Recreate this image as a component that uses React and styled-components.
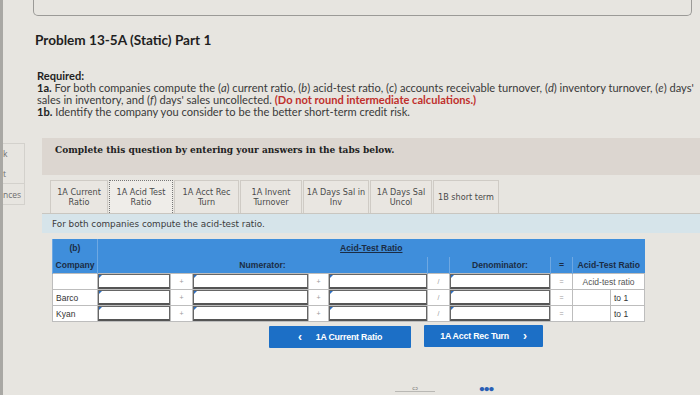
import React from 'react';
import styled, { createGlobalStyle } from 'styled-components';

const Global = createGlobalStyle`
  html, body {
    margin: 0;
    padding: 0;
    background: #e7e5e0;
    overflow: hidden;
  }
  body {
    font-family: "Lato", "Liberation Sans", sans-serif;
    color: #2a2a2a;
  }
`;

const Page = styled.div`
  width: 700px;
  height: 395px;
  display: flex;
  overflow: hidden;
  position: relative;
`;

const Side = styled.div`
  width: 25px;
  flex: none;
  border-left: 3px solid #a9a8a4;
  box-sizing: border-box;
  padding-top: 143px;
  display: flex;
  flex-direction: column;
`;

const SideItem = styled.div`
  height: ${p => p.h}px;
  border-top: 1px solid #d3d1cc;
  border-right: 1px solid #d3d1cc;
  border-bottom: ${p => (p.last ? '1px solid #d3d1cc' : 'none')};
  font-family: "Open Sans", sans-serif;
  font-size: 8.5px;
  color: #6e6e6e;
  display: flex;
  flex-direction: column;
  justify-content: space-around;
  box-sizing: border-box;
`;

const Main = styled.div`
  flex: 1;
  padding-left: 8px;
  display: flex;
  flex-direction: column;
`;

const TopCard = styled.div`
  width: 659px;
  height: 16px;
  box-sizing: border-box;
  border: 1px solid #9b9a97;
  border-top: none;
  border-radius: 0 0 5px 5px;
`;

const Title = styled.h1`
  margin: 16px 0 0 2px;
  font-size: 13.6px;
  line-height: 16px;
  font-weight: 700;
  color: #1f1f1f;
`;

const Required = styled.div`
  margin: 22px 0 0 4px;
  font-size: 11.1px;
  line-height: 12px;
  color: #3a3a3a;
  white-space: nowrap;
  b { color: #1f1f1f; }
  i { font-style: italic; }
`;

const Red = styled.b`
  color: #c0302c !important;
`;

const Question = styled.div`
  margin: 20px 0 0 9px;
  width: 680px;
`;

const Band = styled.div`
  height: 37px;
  box-sizing: border-box;
  background: #dcd6d0;
  padding: 7px 13px;
  font-family: "DejaVu Serif", serif;
  font-weight: 700;
  font-size: 9px;
  color: #222;
`;

const Tabs = styled.div`
  margin-top: 5px;
  padding-left: 8px;
  display: flex;
  gap: 1px;
  height: 33px;
  border-bottom: 1px solid #c9c6c0;
`;

const Tab = styled.div`
  width: ${p => p.w}px;
  box-sizing: border-box;
  background: ${p => (p.active ? '#efede9' : '#e9e6e1')};
  border: ${p => (p.active ? '1px dotted #777' : '1px solid #cfcbc5')};
  border-bottom: none;
  font-family: "DejaVu Sans", sans-serif;
  font-size: 8.1px;
  line-height: 10px;
  color: #4a4a4a;
  display: flex;
  align-items: center;
  justify-content: center;
  text-align: center;
  white-space: nowrap;
`;

const Instr = styled.div`
  height: 19px;
  background: #d6e4ea;
  padding: 5px 10px 0;
  box-sizing: border-box;
  font-family: "DejaVu Sans", sans-serif;
  font-size: 8.8px;
  color: #3b3b3b;
`;

const Table = styled.table`
  margin: 6px 0 0 10px;
  border-collapse: collapse;
  table-layout: fixed;
  width: 592px;
  font-family: "Liberation Sans", Arial, sans-serif;
  font-size: 8.5px;
  background: #fff;
`;

const Head = styled.th`
  background: #3f8edb;
  color: #1b2c44;
  font-weight: 700;
  font-size: 8.6px;
  height: ${p => p.h || 16}px;
  padding: 0;
  border-left: 1px solid #6ea8e2;
  text-align: center;
  u { text-decoration: underline; }
`;

const Cell = styled.td`
  height: 15px;
  padding: 0;
  border: 1px solid #bdbdbd;
  color: ${p => (p.muted ? '#9a9a9a' : '#333')};
  text-align: ${p => p.align || 'center'};
  padding-left: ${p => (p.align === 'left' ? '3px' : '0')};
  font-size: ${p => (p.sym ? '7px' : '8.5px')};
`;

const InputCell = styled.td`
  height: 15px;
  padding: 0;
  border: 1px solid #bdbdbd;
`;

const InputBox = styled.div`
  height: 15px;
  box-sizing: border-box;
  border: 1px solid #666;
  border-bottom: 2px solid #555;
  background: #fff;
  position: relative;
  &::before {
    content: '';
    position: absolute;
    left: 0;
    top: 0;
    border-top: 3px solid #2d6fc2;
    border-right: 3px solid transparent;
  }
`;

const Buttons = styled.div`
  margin: 3px 0 0 227px;
  display: flex;
  gap: 13px;
  align-items: flex-start;
`;

const NavButton = styled.button`
  width: ${p => p.w}px;
  height: 22px;
  border: none;
  border-radius: 1px;
  background: #1c6fc6;
  color: #fff;
  font-family: "Liberation Sans", Arial, sans-serif;
  font-weight: 700;
  font-size: 8.8px;
  letter-spacing: -0.2px;
  display: flex;
  align-items: center;
  justify-content: center;
  gap: 14px;
  margin-top: ${p => p.mt || 0}px;
  padding: 0;
  span { font-size: 12px; }
`;

const Footer = styled.div`
  margin: 36px 0 0 362px;
  display: flex;
  align-items: center;
  gap: 44px;
`;

const LinkMark = styled.div`
  width: 40px;
  border-bottom: 1px solid #b9b8b4;
  text-align: center;
  font-size: 6px;
  line-height: 7px;
  color: #777;
`;

const Dots = styled.div`
  font-size: 10px;
  line-height: 6px;
  color: #2a5fb5;
  font-weight: 700;
  letter-spacing: -1px;
`;

const tabs = [
  ['1A Current', 'Ratio', 58],
  ['1A Acid Test', 'Ratio', 64],
  ['1A Acct Rec', 'Turn', 65],
  ['1A Invent', 'Turnover', 62],
  ['1A Days Sal in', 'Inv', 66],
  ['1A Days Sal', 'Uncol', 62],
  ['1B short term', '', 66],
];

const Row = ({ name, first }) => (
  <tr>
    <Cell align="left">{name}</Cell>
    <InputCell><InputBox /></InputCell>
    <Cell muted sym>+</Cell>
    <InputCell><InputBox /></InputCell>
    <Cell muted sym>+</Cell>
    <InputCell><InputBox /></InputCell>
    <Cell muted sym>/</Cell>
    <InputCell><InputBox /></InputCell>
    <Cell muted sym>=</Cell>
    {first ? (
      <Cell colSpan={2} muted style={{ color: '#555' }}>Acid-test ratio</Cell>
    ) : (
      <>
        <Cell />
        <Cell align="left">to 1</Cell>
      </>
    )}
  </tr>
);

export default function App() {
  return (
    <Page>
      <Global />
      <Side>
        <SideItem h={40}><div>k</div><div>t</div></SideItem>
        <SideItem h={22} last><div>nces</div></SideItem>
      </Side>
      <Main>
        <TopCard />
        <Title>Problem 13-5A (Static) Part 1</Title>
        <Required>
          <b>Required:</b>
          <div>
            <b>1a.</b> For both companies compute the (<i>a</i>) current ratio, (<i>b</i>) acid-test ratio, (<i>c</i>) accounts receivable turnover, (<i>d</i>) inventory turnover, (<i>e</i>) days'
          </div>
          <div>
            sales in inventory, and (<i>f</i>) days' sales uncollected. <Red>(Do not round intermediate calculations.)</Red>
          </div>
          <div>
            <b>1b.</b> Identify the company you consider to be the better short-term credit risk.
          </div>
        </Required>
        <Question>
          <Band>Complete this question by entering your answers in the tabs below.</Band>
          <Tabs>
            {tabs.map(([a, b, w], i) => (
              <Tab key={a} w={w} active={i === 1}>
                <div>{a}{b && <br />}{b}</div>
              </Tab>
            ))}
          </Tabs>
          <Instr>For both companies compute the acid-test ratio.</Instr>
          <Table>
            <colgroup>
              <col style={{ width: 45 }} />
              <col style={{ width: 73 }} />
              <col style={{ width: 22 }} />
              <col style={{ width: 116 }} />
              <col style={{ width: 20 }} />
              <col style={{ width: 99 }} />
              <col style={{ width: 22 }} />
              <col style={{ width: 101 }} />
              <col style={{ width: 22 }} />
              <col style={{ width: 38 }} />
              <col style={{ width: 34 }} />
            </colgroup>
            <thead>
              <tr>
                <Head h={18}>(b)</Head>
                <Head h={18} colSpan={10}><u>Acid-Test Ratio</u></Head>
              </tr>
              <tr>
                <Head>Company</Head>
                <Head colSpan={5}>Numerator:</Head>
                <Head />
                <Head>Denominator:</Head>
                <Head>=</Head>
                <Head colSpan={2}>Acid-Test Ratio</Head>
              </tr>
            </thead>
            <tbody>
              <Row name="" first />
              <Row name="Barco" />
              <Row name="Kyan" />
            </tbody>
          </Table>
          <Buttons>
            <NavButton w={142} mt={1}><span>&#8249;</span>1A Current Ratio</NavButton>
            <NavButton w={119}>1A Acct Rec Turn<span>&#8250;</span></NavButton>
          </Buttons>
        </Question>
        <Footer>
          <LinkMark>cɔ</LinkMark>
          <Dots>•••</Dots>
        </Footer>
      </Main>
    </Page>
  );
}
